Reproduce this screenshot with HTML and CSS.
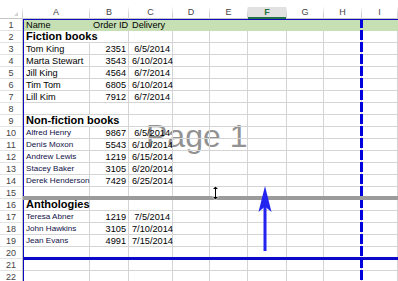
FILE: index.html
```html
<!DOCTYPE html>
<html lang="en">
<head>
  <meta charset="UTF-8">
  <meta name="viewport" content="width=device-width, initial-scale=1.0">
  <title>Page Break Preview</title>
  <link rel="stylesheet" href="styles.css">
</head>
<body>

<div class="sheet">
  <div class="page-label">Page 1</div>

  <div class="row hdr">
    <div class="corner"><span class="tri"></span></div>
    <div class="ch">A</div>
    <div class="ch">B</div>
    <div class="ch">C</div>
    <div class="ch">D</div>
    <div class="ch">E</div>
    <div class="ch sel">F</div>
    <div class="ch">G</div>
    <div class="ch">H</div>
    <div class="ch">I</div>
  </div>

  <div class="row fill">
    <div class="rh">1</div>
    <div class="c">Name</div><div class="c r">Order ID</div><div class="c">Delivery</div>
    <div class="c"></div><div class="c"></div><div class="c"></div><div class="c"></div><div class="c"></div><div class="c"></div>
  </div>
  <div class="row">
    <div class="rh">2</div>
    <div class="c title over">Fiction books</div><div class="c"></div><div class="c"></div>
    <div class="c"></div><div class="c"></div><div class="c"></div><div class="c"></div><div class="c"></div><div class="c"></div>
  </div>
  <div class="row">
    <div class="rh">3</div>
    <div class="c">Tom King</div><div class="c r">2351</div><div class="c r">6/5/2014</div>
    <div class="c"></div><div class="c"></div><div class="c"></div><div class="c"></div><div class="c"></div><div class="c"></div>
  </div>
  <div class="row">
    <div class="rh">4</div>
    <div class="c">Marta Stewart</div><div class="c r">3543</div><div class="c r">6/10/2014</div>
    <div class="c"></div><div class="c"></div><div class="c"></div><div class="c"></div><div class="c"></div><div class="c"></div>
  </div>
  <div class="row">
    <div class="rh">5</div>
    <div class="c">Jill King</div><div class="c r">4564</div><div class="c r">6/7/2014</div>
    <div class="c"></div><div class="c"></div><div class="c"></div><div class="c"></div><div class="c"></div><div class="c"></div>
  </div>
  <div class="row">
    <div class="rh">6</div>
    <div class="c">Tim Tom</div><div class="c r">6805</div><div class="c r">6/10/2014</div>
    <div class="c"></div><div class="c"></div><div class="c"></div><div class="c"></div><div class="c"></div><div class="c"></div>
  </div>
  <div class="row">
    <div class="rh">7</div>
    <div class="c">Lill Kim</div><div class="c r">7912</div><div class="c r">6/7/2014</div>
    <div class="c"></div><div class="c"></div><div class="c"></div><div class="c"></div><div class="c"></div><div class="c"></div>
  </div>
  <div class="row">
    <div class="rh">8</div>
    <div class="c"></div><div class="c"></div><div class="c"></div>
    <div class="c"></div><div class="c"></div><div class="c"></div><div class="c"></div><div class="c"></div><div class="c"></div>
  </div>
  <div class="row">
    <div class="rh">9</div>
    <div class="c title over">Non-fiction books</div><div class="c"></div><div class="c"></div>
    <div class="c"></div><div class="c"></div><div class="c"></div><div class="c"></div><div class="c"></div><div class="c"></div>
  </div>
  <div class="row">
    <div class="rh">10</div>
    <div class="c small">Alfred Henry</div><div class="c r">9867</div><div class="c r">6/5/2014</div>
    <div class="c"></div><div class="c"></div><div class="c"></div><div class="c"></div><div class="c"></div><div class="c"></div>
  </div>
  <div class="row">
    <div class="rh">11</div>
    <div class="c small">Denis Moxon</div><div class="c r">5543</div><div class="c r">6/10/2014</div>
    <div class="c"></div><div class="c"></div><div class="c"></div><div class="c"></div><div class="c"></div><div class="c"></div>
  </div>
  <div class="row">
    <div class="rh">12</div>
    <div class="c small">Andrew Lewis</div><div class="c r">1219</div><div class="c r">6/15/2014</div>
    <div class="c"></div><div class="c"></div><div class="c"></div><div class="c"></div><div class="c"></div><div class="c"></div>
  </div>
  <div class="row">
    <div class="rh">13</div>
    <div class="c small">Stacey Baker</div><div class="c r">3105</div><div class="c r">6/20/2014</div>
    <div class="c"></div><div class="c"></div><div class="c"></div><div class="c"></div><div class="c"></div><div class="c"></div>
  </div>
  <div class="row">
    <div class="rh">14</div>
    <div class="c small">Derek Henderson</div><div class="c r">7429</div><div class="c r">6/25/2014</div>
    <div class="c"></div><div class="c"></div><div class="c"></div><div class="c"></div><div class="c"></div><div class="c"></div>
  </div>
  <div class="row">
    <div class="rh">15</div>
    <div class="c"></div><div class="c"></div><div class="c"></div>
    <div class="c"></div><div class="c"></div><div class="c"></div><div class="c"></div><div class="c"></div><div class="c"></div>
  </div>
  <div class="row">
    <div class="rh">16</div>
    <div class="c title">Anthologies</div><div class="c"></div><div class="c"></div>
    <div class="c"></div><div class="c"></div><div class="c"></div><div class="c"></div><div class="c"></div><div class="c"></div>
  </div>
  <div class="row">
    <div class="rh">17</div>
    <div class="c small">Teresa Abner</div><div class="c r">1219</div><div class="c r">7/5/2014</div>
    <div class="c"></div><div class="c"></div><div class="c"></div><div class="c"></div><div class="c"></div><div class="c"></div>
  </div>
  <div class="row">
    <div class="rh">18</div>
    <div class="c small">John Hawkins</div><div class="c r">3105</div><div class="c r">7/10/2014</div>
    <div class="c"></div><div class="c"></div><div class="c"></div><div class="c"></div><div class="c"></div><div class="c"></div>
  </div>
  <div class="row">
    <div class="rh">19</div>
    <div class="c small">Jean Evans</div><div class="c r">4991</div><div class="c r">7/15/2014</div>
    <div class="c"></div><div class="c"></div><div class="c"></div><div class="c"></div><div class="c"></div><div class="c"></div>
  </div>
  <div class="row">
    <div class="rh">20</div>
    <div class="c"></div><div class="c"></div><div class="c"></div>
    <div class="c"></div><div class="c"></div><div class="c"></div><div class="c"></div><div class="c"></div><div class="c"></div>
  </div>
  <div class="row">
    <div class="rh">21</div>
    <div class="c"></div><div class="c"></div><div class="c"></div>
    <div class="c"></div><div class="c"></div><div class="c"></div><div class="c"></div><div class="c"></div><div class="c"></div>
  </div>
  <div class="row">
    <div class="rh">22</div>
    <div class="c"></div><div class="c"></div><div class="c"></div>
    <div class="c"></div><div class="c"></div><div class="c"></div><div class="c"></div><div class="c"></div><div class="c"></div>
  </div>

  <!-- linhas da área de impressão -->
  <div class="print-top"></div>
  <div class="print-left"></div>
  <div class="print-bottom"></div>
  <div class="page-break-v"></div>
  <div class="drag-line"></div>

  <!-- cursor de redimensionar -->
  <svg class="cursor" width="9" height="16" viewBox="0 0 9 16">
    <path d="M4.5 0.5 L8 4.5 L5.5 4.5 L5.5 11.5 L8 11.5 L4.5 15.5 L1 11.5 L3.5 11.5 L3.5 4.5 L1 4.5 Z" fill="#fff"/>
    <path d="M4.5 1.5 L7 4 L5 4 L5 12 L7 12 L4.5 14.5 L2 12 L4 12 L4 4 L2 4 Z" fill="#000"/>
  </svg>

  <!-- seta azul -->
  <svg class="arrow" width="16" height="68" viewBox="0 0 16 68">
    <path d="M8 0 L14.5 26 L8 20.5 L1.5 26 Z" fill="#2424f0"/>
    <rect x="6.5" y="19" width="3" height="46" fill="#2424f0"/>
  </svg>
</div>

</body>
</html>
```

FILE: styles.css
```css
/* Planilha em modo de quebra de página */
body {
  margin: 0;
  background: #fff;
  font-family: "Liberation Sans", Arial, sans-serif;
}
.sheet {
  position: relative;
  width: 398px;
  height: 281px;
  overflow: hidden;
}
.row {
  position: relative;
  z-index: 1;
  display: grid;
  grid-template-columns: 23px 67px 39px 44px 37px 38px 39px 37px 38px 1fr;
  height: 12px;
}
.row.hdr {
  height: 19px;
}

/* cabeçalhos */
.corner, .ch {
  position: relative;
  box-sizing: border-box;
  margin-top: 7px;
  height: 12px;
  border-right: 1px solid;
  border-image: linear-gradient(#fff, #d0d0d0 60%) 1;
  box-shadow: inset 0 -1px 0 #c6c6c6;
  font-size: 9px;
  line-height: 11px;
  color: #444;
  text-align: center;
}
.tri {
  position: absolute;
  right: 4px;
  bottom: 3px;
  width: 0;
  height: 0;
  border-left: 4px solid transparent;
  border-bottom: 4px solid #d2d2d2;
}
.ch.sel {
  background: #e1e1e1;
  color: #217346;
  font-weight: bold;
  box-shadow: inset 0 -2px 0 #217346;
}
.rh {
  box-sizing: border-box;
  height: 12px;
  border-right: 1px solid #c6c6c6;
  border-bottom: 1px solid #e3e3e3;
  font-size: 9px;
  line-height: 12px;
  color: #444;
  text-align: center;
}

/* células */
.c {
  box-sizing: border-box;
  height: 12px;
  padding: 0 3px;
  border-right: 1px solid #d4d4d4;
  border-bottom: 1px solid #d4d4d4;
  font-size: 9.2px;
  line-height: 13px;
  color: #000;
  white-space: nowrap;
}
.c.r {
  text-align: right;
  padding-right: 2px;
}
.c.over {
  border-right-color: transparent;
}
.c.title {
  font-size: 11px;
  font-weight: bold;
  line-height: 10px;
}
.c.small {
  font-size: 8.1px;
  line-height: 12px;
  color: #101048;
}
.fill .c {
  background: #c6e0b4;
  border-color: #c6e0b4;
}

/* marca d'água */
.page-label {
  position: absolute;
  left: 146px;
  top: 118px;
  z-index: 0;
  font-size: 32px;
  color: #929292;
  white-space: nowrap;
}

/* linhas de impressão */
.print-top, .print-left, .print-bottom, .page-break-v, .drag-line {
  position: absolute;
  z-index: 2;
}
.print-top {
  left: 23px;
  right: 0;
  top: 19px;
  height: 1px;
  background: #0a0ac0;
}
.print-left {
  left: 23px;
  top: 19px;
  bottom: 0;
  width: 1px;
  background: #0a0ac0;
}
.print-bottom {
  left: 23px;
  right: 0;
  top: 257px;
  height: 3px;
  background: #0a0ac8;
}
.drag-line {
  left: 23px;
  right: 0;
  top: 196px;
  height: 4px;
  background: #9b9b9b;
}
.page-break-v {
  left: 360px;
  top: 19px;
  bottom: 0;
  width: 3px;
  background: repeating-linear-gradient(to bottom, #0000dd 0 9px, transparent 9px 11px, #0000dd 11px 12px);
}
.cursor {
  position: absolute;
  z-index: 3;
  left: 211px;
  top: 185px;
}
.arrow {
  position: absolute;
  z-index: 3;
  left: 257px;
  top: 186px;
}
```
